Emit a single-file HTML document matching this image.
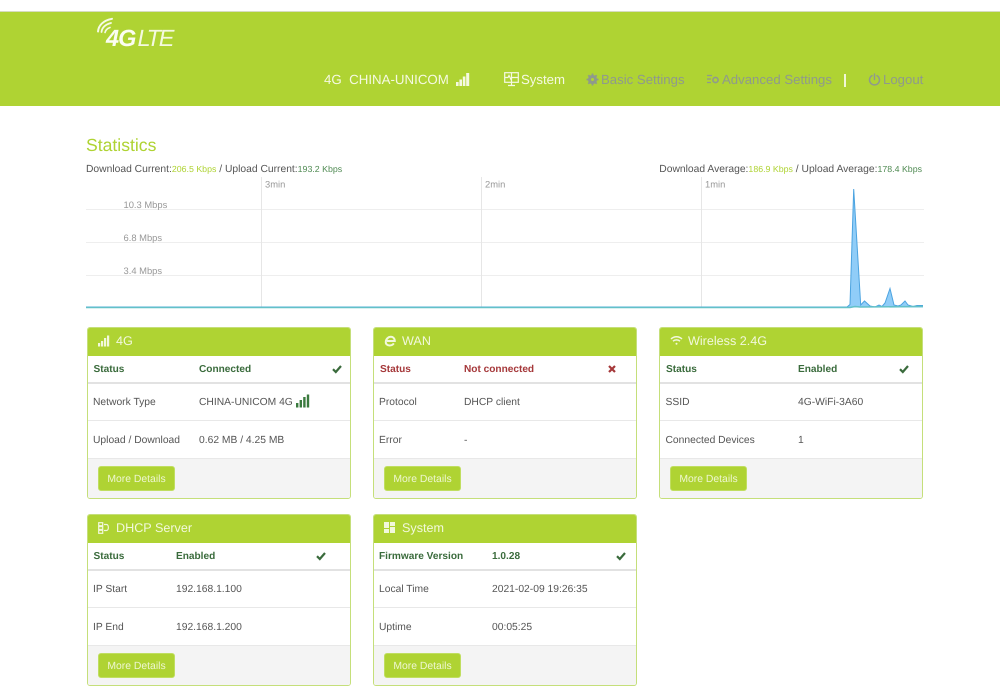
<!DOCTYPE html>
<html><head><meta charset="utf-8"><title>4G LTE</title>
<style>
*{box-sizing:border-box}
html,body{margin:0;padding:0;background:#fff}
body{position:relative;width:1000px;height:698px;overflow:hidden;font-family:"Liberation Sans",Arial,sans-serif;color:#555;text-rendering:geometricPrecision}
.a{position:absolute;white-space:nowrap}
.hdr{position:absolute;left:0;top:11px;width:1000px;height:95px;background:#afd333;border-top:1px solid #d6dcc0}
.nav{font-size:13.2px;line-height:16px;color:#8f9a8c}
.panel{position:absolute;width:264px;height:172px;border:1px solid #c5df7a;border-radius:3px;background:#fff;overflow:hidden}
.ph{position:absolute;left:-1px;top:-1px;width:264px;height:29px;background:#afd333;color:#f2f8dc;font-size:12.6px;line-height:28px}
.ph span{position:absolute;left:29px}
.ph svg{position:absolute;left:11px;top:8px}
.l1{position:absolute;left:0;right:0;top:54px;height:2px;background:#e2e2e2}
.l2{position:absolute;left:0;right:0;top:92px;height:1px;background:#e8e8e8}
.ft{position:absolute;left:0;right:0;top:130px;bottom:0;background:#f4f4f4;border-top:1px solid #e8e8e8}
.btn{position:absolute;left:10px;top:138px;width:77px;height:25px;background:#afd333;border:1px solid #c0de60;border-radius:3px;color:#eef6d0;font-size:10.4px;line-height:25px;text-align:center}
.t{position:absolute;font-size:10.3px;line-height:12px;white-space:nowrap;color:#555}
.b{font-weight:bold;color:#3a6b3c;font-size:10.1px}
.r{font-weight:bold;color:#a5383a;font-size:10.1px}
.ck{position:absolute}
</style></head><body>

<div class="hdr"></div>

<!-- logo -->
<svg class="a" style="left:96px;top:17px" width="30" height="26" viewBox="0 0 30 26" fill="none" stroke="#f6fae6" stroke-linecap="round">
<path d="M2 14.5C2.5 8.500 7 3.500 16 1.800" stroke-width="2"/>
<path d="M5.500 15C6 11 9 7.500 15 6" stroke-width="1.800"/>
<path d="M9 15.500C9.500 13.500 11 11.500 14 10.500" stroke-width="1.600"/>
</svg>
<div class="a" style="left:106px;top:26px;font-size:23.5px;line-height:25px;font-weight:bold;font-style:italic;color:#fbfdf2;letter-spacing:-1px">4G</div>
<div class="a" style="left:137.5px;top:26px;font-size:23.5px;line-height:25px;font-style:italic;color:#f4f9df;letter-spacing:-2.2px;font-weight:normal">LTE</div>

<!-- nav -->
<div class="a nav" style="left:324px;top:72px;color:#f5f9e2;font-size:13.3px">4G&nbsp; CHINA-UNICOM</div>
<svg class="a" style="left:456px;top:73px" width="14" height="13" viewBox="0 0 14 13" fill="#f5f9e2"><rect x="0" y="9" width="2.600" height="4"/><rect x="3.400" y="6.500" width="2.600" height="6.500"/><rect x="6.800" y="3.500" width="2.600" height="9.500"/><rect x="10.200" y="0" width="3" height="13"/></svg>

<svg class="a" style="left:504px;top:72px" width="15" height="15" viewBox="0 0 15 15" fill="none" stroke="#f5f9e2" stroke-width="1.200"><rect x=".7" y=".7" width="13.600" height="9.600"/><path d="M7.500 1v9M1 5.500h3l1-2 2 4 1-2h6M4 13.500h7M7.500 10.500v3"/></svg>
<div class="a nav" style="left:521px;top:72px;color:#f5f9e2">System</div>

<svg class="a" style="left:586px;top:73px" width="13" height="13" viewBox="0 0 13 13"><circle cx="6.500" cy="6.500" r="4.600" fill="#8f9a8c"/><path d="M6.500 .5v12M.5 6.500h12M2.300 2.300l8.400 8.400M10.700 2.300l-8.400 8.400" stroke="#8f9a8c" stroke-width="1.800"/><circle cx="6.500" cy="6.500" r="1.500" fill="#afd333"/></svg>
<div class="a nav" style="left:601px;top:72px">Basic Settings</div>

<svg class="a" style="left:707px;top:74px" width="13" height="11" viewBox="0 0 13 11" fill="none" stroke="#8f9a8c" stroke-width="1.200"><path d="M0 1.500h5M0 5h4M0 8.500h4"/><circle cx="8.500" cy="6" r="2.600" stroke-width="1.600"/></svg>
<div class="a nav" style="left:722px;top:72px">Advanced Settings</div>
<div class="a" style="left:844px;top:74px;width:2px;height:13px;background:#f0f6d6"></div>

<svg class="a" style="left:868px;top:73px" width="13" height="13" viewBox="0 0 13 13" fill="none" stroke="#8f9a8c" stroke-width="1.500" stroke-linecap="round"><path d="M4 2.600a5 5 0 1 0 5 0M6.500 1v5.500"/></svg>
<div class="a nav" style="left:883px;top:72px">Logout</div>

<!-- statistics -->
<div class="a" style="left:86px;top:135px;font-size:17.6px;line-height:20px;color:#afd333">Statistics</div>

<div class="a" style="left:86px;top:163px;font-size:10.3px;line-height:12px;color:#555">Download Current:<span style="font-size:8.8px;color:#afd333">206.5 Kbps</span> / Upload Current:<span style="font-size:8.8px;color:#4f8a52">193.2 Kbps</span></div>
<div class="a" style="right:78px;top:163px;font-size:10.3px;line-height:12px;color:#555">Download Average:<span style="font-size:8.8px;color:#afd333">186.9 Kbps</span> / Upload Average:<span style="font-size:8.8px;color:#4f8a52">178.4 Kbps</span></div>

<svg class="a" style="left:0;top:176px" width="1000" height="136" viewBox="0 176 1000 136">
<g stroke="#eeeeee" stroke-width="1">
<path d="M86 209.500H924M86 242.500H924M86 275.500H924"/>
<path stroke="#e6e6e6" d="M261.500 177V307M481.500 177V307M701.500 177V307"/>
</g>
<g font-family="Liberation Sans, Arial, sans-serif" font-size="9.400" fill="#999">
<text x="265" y="187.500">3min</text><text x="485" y="187.500">2min</text><text x="705" y="187.500">1min</text>
<text x="123.500" y="208">10.3 Mbps</text><text x="123.500" y="241">6.8 Mbps</text><text x="123.500" y="274">3.4 Mbps</text>
</g>
<path d="M847 307L850 304.500L853.700 189L860.700 305L864.500 301L870 306L875 307L879 305L882 306.500L885 303L890 288.500L894 305L898 306L901 305L905 301L908 305L913 306.500L917 305.500L923 305.500V307.500H847Z" fill="#90cdf8"/>
<path d="M86 307L847 307L850 304.500L853.700 189L860.700 305L864.500 301L870 306L875 307L879 305L882 306.500L885 303L890 288.500L894 305L898 306L901 305L905 301L908 305L913 306.500L917 305.500L923 305.500" fill="none" stroke="#4ba3e0" stroke-width="1"/>
<path d="M86 307.500H850L855 306.500L860 307L923 306.500" fill="none" stroke="#63c1c8" stroke-width="1.600"/>
</svg>

<!-- 4G -->
<div class="panel" style="left:87px;top:327px">
<div class="ph"><svg width="12" height="12" viewBox="0 0 12 12" fill="#f2f8dc"><rect x="0" y="8" width="2.200" height="3.500"/><rect x="3" y="6" width="2.200" height="5.500"/><rect x="6" y="3" width="2.200" height="8.500"/><rect x="9" y="0.500" width="2.200" height="11"/></svg><span>4G</span></div>
<div class="l1"></div><div class="l2"></div><div class="ft"></div>
<div class="t b" style="left:5.5px;top:36px">Status</div><div class="t b" style="left:111px;top:36px">Connected</div>
<svg class="ck" style="left:244px;top:36px" width="10" height="10" viewBox="0 0 10 10" fill="none" stroke="#3a6b3c" stroke-width="2.200"><path d="M1 5.200L3.800 8L9 2"/></svg>
<div class="t" style="left:5px;top:69px">Network Type</div><div class="t" style="left:111px;top:69px">CHINA-UNICOM 4G</div>
<svg class="ck" style="left:208px;top:66px" width="14" height="14" viewBox="0 0 14 14" fill="#3a7a3e"><rect x="0" y="9" width="2.400" height="4.500"/><rect x="3.600" y="6" width="2.400" height="7.500"/><rect x="7.200" y="3" width="2.400" height="10.500"/><rect x="10.800" y="0.500" width="2.400" height="13"/></svg>
<div class="t" style="left:5px;top:107px">Upload / Download</div><div class="t" style="left:111px;top:107px">0.62 MB / 4.25 MB</div>
<div class="btn">More Details</div>
</div>

<!-- WAN -->
<div class="panel" style="left:373px;top:327px">
<div class="ph"><svg width="13" height="12" viewBox="0 0 13 12" fill="none" stroke="#f2f8dc" stroke-width="2"><path d="M3 6H10.800C10.800 3.400 9 1.800 7 1.800C4.200 1.800 2 4 1.800 6.800C1.600 9.200 3.400 10.500 5.600 10.500C7.500 10.500 9 9.700 9.800 8.400"/></svg><span>WAN</span></div>
<div class="l1"></div><div class="l2"></div><div class="ft"></div>
<div class="t r" style="left:6px;top:36px">Status</div><div class="t r" style="left:90px;top:36px">Not connected</div>
<svg class="ck" style="left:234px;top:37px" width="8" height="8" viewBox="0 0 8 8" fill="none" stroke="#a5383a" stroke-width="2.200"><path d="M1 1L7 7M7 1L1 7"/></svg>
<div class="t" style="left:5px;top:69px">Protocol</div><div class="t" style="left:90px;top:69px">DHCP client</div>
<div class="t" style="left:5px;top:107px">Error</div><div class="t" style="left:90px;top:107px">-</div>
<div class="btn">More Details</div>
</div>

<!-- Wireless -->
<div class="panel" style="left:659px;top:327px">
<div class="ph"><svg width="13" height="11" viewBox="0 0 13 11" fill="none" stroke="#f2f8dc" stroke-width="1.500"><path d="M1 4C4.200 1 8.800 1 12 4M3 6.200C5 4.400 8 4.400 10 6.200"/><circle cx="6.500" cy="8.800" r="1" fill="#f2f8dc" stroke="none"/></svg><span>Wireless 2.4G</span></div>
<div class="l1"></div><div class="l2"></div><div class="ft"></div>
<div class="t b" style="left:6px;top:36px">Status</div><div class="t b" style="left:138px;top:36px">Enabled</div>
<svg class="ck" style="left:239px;top:36px" width="10" height="10" viewBox="0 0 10 10" fill="none" stroke="#3a6b3c" stroke-width="2.200"><path d="M1 5.200L3.800 8L9 2"/></svg>
<div class="t" style="left:5.5px;top:69px">SSID</div><div class="t" style="left:138px;top:69px">4G-WiFi-3A60</div>
<div class="t" style="left:5.5px;top:107px">Connected Devices</div><div class="t" style="left:138px;top:107px">1</div>
<div class="btn">More Details</div>
</div>

<!-- DHCP -->
<div class="panel" style="left:87px;top:514px">
<div class="ph"><svg width="12" height="12" viewBox="0 0 12 12" fill="none" stroke="#f2f8dc" stroke-width="1.200"><rect x=".7" y=".7" width="4" height="3"/><rect x=".7" y="4.600" width="4" height="2.800"/><rect x=".7" y="8.300" width="4" height="3"/><path d="M6 2.500H8.500C11 2.500 11 8.500 8.500 8.500H6"/></svg><span>DHCP Server</span></div>
<div class="l1"></div><div class="l2"></div><div class="ft"></div>
<div class="t b" style="left:5.5px;top:36px">Status</div><div class="t b" style="left:88px;top:36px">Enabled</div>
<svg class="ck" style="left:228px;top:36px" width="10" height="10" viewBox="0 0 10 10" fill="none" stroke="#3a6b3c" stroke-width="2.200"><path d="M1 5.200L3.800 8L9 2"/></svg>
<div class="t" style="left:5px;top:69px">IP Start</div><div class="t" style="left:88px;top:69px">192.168.1.100</div>
<div class="t" style="left:5px;top:107px">IP End</div><div class="t" style="left:88px;top:107px">192.168.1.200</div>
<div class="btn">More Details</div>
</div>

<!-- System -->
<div class="panel" style="left:373px;top:514px">
<div class="ph"><svg width="11" height="11" viewBox="0 0 11 11" fill="#f2f8dc"><rect x="0" y="0" width="5" height="6"/><rect x="6" y="0" width="5" height="4"/><rect x="0" y="7" width="5" height="4"/><rect x="6" y="5" width="5" height="6"/></svg><span>System</span></div>
<div class="l1"></div><div class="l2"></div><div class="ft"></div>
<div class="t b" style="left:5px;top:36px">Firmware Version</div><div class="t b" style="left:118px;top:36px">1.0.28</div>
<svg class="ck" style="left:242px;top:36px" width="10" height="10" viewBox="0 0 10 10" fill="none" stroke="#3a6b3c" stroke-width="2.200"><path d="M1 5.200L3.800 8L9 2"/></svg>
<div class="t" style="left:5px;top:69px">Local Time</div><div class="t" style="left:118px;top:69px">2021-02-09 19:26:35</div>
<div class="t" style="left:5px;top:107px">Uptime</div><div class="t" style="left:118px;top:107px">00:05:25</div>
<div class="btn">More Details</div>
</div>

</body></html>
